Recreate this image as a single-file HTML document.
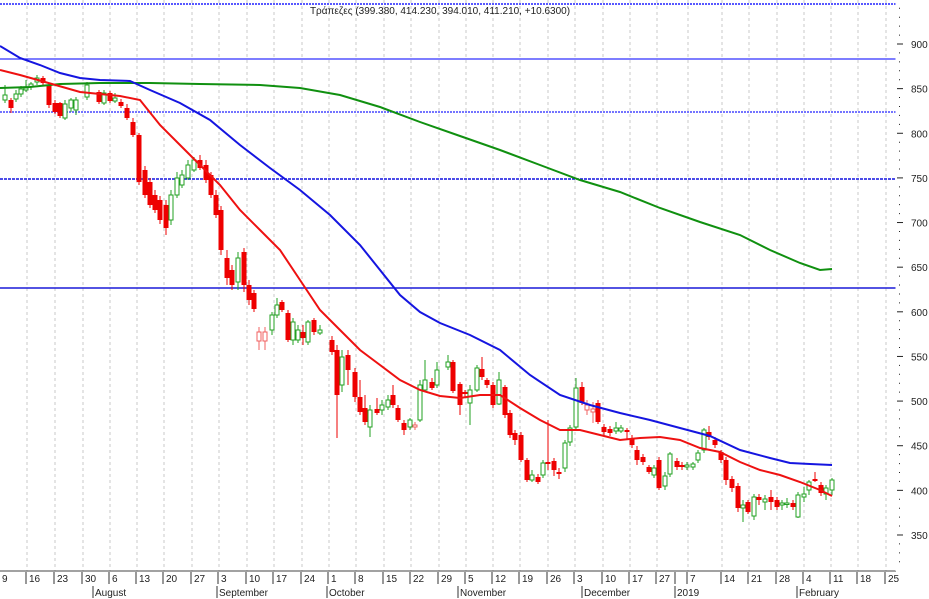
<!DOCTYPE html>
<html><head><meta charset="utf-8"><style>
html,body{margin:0;padding:0;background:#fff;width:929px;height:599px;overflow:hidden}
svg{display:block}
text{font-family:"Liberation Sans Narrow","Liberation Sans","DejaVu Sans",sans-serif;fill:#222}
</style></head><body>
<svg id="s" width="929" height="599" xmlns="http://www.w3.org/2000/svg">
<rect width="929" height="599" fill="#fff"/>
<g id="grid"></g>
<line x1="0" y1="4" x2="896" y2="4" stroke="#2020ff" stroke-width="1.5" stroke-dasharray="2,1"/>
<line x1="0" y1="59" x2="896" y2="59" stroke="#3030ff" stroke-width="1.2"/>
<line x1="0" y1="112" x2="896" y2="112" stroke="#2020ff" stroke-width="1.3" stroke-dasharray="2,1"/>
<line x1="0" y1="179" x2="896" y2="179" stroke="#1010e0" stroke-width="1.6" stroke-dasharray="3,1"/>
<line x1="0" y1="288" x2="896" y2="288" stroke="#1a1ad8" stroke-width="1.6"/>
<text x="440" y="14" font-size="10" text-anchor="middle">Τράπεζες (399.380, 414.230, 394.010, 411.210, +10.6300)</text>
<g id="c"></g>
<polyline fill="none" stroke="#109010" stroke-width="2" points="0,88 30,87 60,84 100,83 150,83 200,84 260,85 300,88 340,95 380,107 420,122 460,136 500,150 540,165 580,180 620,192 660,208 700,222 740,235 770,250 800,263 820,270 832,269"/>
<polyline fill="none" stroke="#1515e0" stroke-width="2" points="0,46 20,58 40,65 60,73 80,78 100,80 130,81 150,90 180,103 210,120 240,145 270,168 300,190 330,215 360,245 380,270 400,295 420,312 440,323 470,335 500,350 530,375 560,395 590,405 620,413 650,420 680,428 710,436 740,450 770,458 790,463 810,464 832,465"/>
<polyline fill="none" stroke="#ee1111" stroke-width="2" points="0,70 20,75 45,82 80,92 120,96 140,100 160,125 180,145 200,165 220,185 240,210 260,230 280,250 300,280 320,310 340,330 360,350 380,365 400,380 420,390 440,396 460,398 480,395 500,395 520,408 540,420 560,430 580,430 600,435 620,440 640,438 660,437 680,440 700,448 720,452 740,462 760,470 780,475 800,482 820,490 832,496"/>
<g id="ax"></g>
<line x1="0" y1="571" x2="896" y2="571" stroke="#444" stroke-width="1"/>
<line x1="896" y1="0" x2="896" y2="571" stroke="#fff"/>
</svg>
<script>
var NS="http://www.w3.org/2000/svg";
function el(p,t,a,txt){var e=document.createElementNS(NS,t);for(var k in a)e.setAttribute(k,a[k]);if(txt)e.textContent=txt;p.appendChild(e);return e;}
var g=document.getElementById('grid'),c=document.getElementById('c'),ax=document.getElementById('ax');
var ticks=[[0,"9"],[27,"16"],[55,"23"],[83,"30"],[110,"6"],[137,"13"],[164,"20"],[192,"27"],[219,"3"],[247,"10"],[274,"17"],[302,"24"],[329,"1"],[356,"8"],[384,"15"],[411,"22"],[439,"29"],[466,"5"],[493,"12"],[520,"19"],[548,"26"],[575,"3"],[603,"10"],[630,"17"],[657,"27"],[688,"7"],[722,"14"],[749,"21"],[777,"28"],[804,"4"],[831,"11"],[858,"18"],[886,"25"]];
ticks.forEach(function(t){
 if(t[0]>0)el(g,'line',{x1:t[0],y1:0,x2:t[0],y2:571,stroke:'#c8c8c8','stroke-dasharray':'3,3'});
 el(ax,'line',{x1:t[0]-1,y1:572,x2:t[0]-1,y2:584,stroke:'#333'});
 el(ax,'text',{x:t[0]+2,y:582,'font-size':'10'},t[1]);
});
el(ax,'line',{x1:675,y1:572,x2:675,y2:584,stroke:'#333'});
[[93,"August"],[217,"September"],[327,"October"],[458,"November"],[582,"December"],[675,"2019"],[797,"February"]].forEach(function(m){
 el(ax,'line',{x1:m[0],y1:586,x2:m[0],y2:598,stroke:'#333'});
 el(ax,'text',{x:m[0]+2,y:596,'font-size':'10'},m[1]);
});
// price axis
for(var p=300;p<=950;p+=10){var y=44+(900-p)*0.8927;if(y<2||y>568)continue;
 var major=p%50==0;
 el(ax,'line',{x1:major?897:899,y1:y,x2:major?903:900,y2:y,stroke:'#222'});
 if(major)el(ax,'text',{x:911,y:y+4,'font-size':'10'},""+p);
}
var D=[[5,95,100,85,103,'g'],[11,100,108,98,113,'r'],[16,94,99,90,102,'g'],[21,89,94,86,97,'g'],[26,88,90,80,92,'g'],[31,84,87,82,90,'g'],[37,78,82,75,85,'g'],[43,78,83,76,86,'r'],[49,85,105,83,108,'r'],[55,103,112,100,114,'r'],[60,103,116,102,118,'r'],[65,104,118,100,120,'g'],[71,100,108,98,112,'g'],[76,100,110,97,115,'g'],[87,85,97,82,100,'g'],[99,92,102,90,104,'r'],[104,93,103,90,105,'g'],[110,93,101,91,103,'r'],[115,98,101,93,103,'g'],[121,102,106,99,108,'r'],[127,108,118,104,120,'r'],[133,122,135,118,137,'r'],[139,135,182,133,185,'r'],[145,170,195,166,198,'r'],[150,182,205,178,208,'r'],[155,195,210,190,213,'r'],[160,200,220,196,224,'r'],[166,205,228,200,235,'r'],[171,195,220,190,225,'g'],[177,178,195,172,198,'g'],[182,175,185,170,188,'g'],[188,165,178,160,180,'g'],[194,160,170,157,172,'g'],[200,160,168,155,170,'r'],[206,165,180,160,183,'r'],[211,175,195,172,198,'r'],[216,195,215,190,218,'r'],[221,210,250,206,255,'r'],[227,258,278,250,285,'r'],[232,270,285,265,290,'r'],[238,258,282,252,290,'g'],[244,252,285,248,292,'r'],[249,285,300,280,305,'r'],[254,293,309,290,312,'r'],[259,332,341,327,350,'p'],[265,332,341,327,350,'p'],[272,315,330,312,335,'g'],[277,305,315,298,318,'g'],[282,302,310,300,312,'r'],[288,313,340,310,342,'r'],[293,322,340,318,345,'g'],[298,330,340,325,343,'g'],[303,332,338,325,345,'r'],[308,322,342,320,345,'g'],[314,320,332,318,335,'r'],[320,330,333,325,335,'g'],[332,340,352,336,355,'r'],[337,350,395,345,438,'r'],[342,357,385,350,392,'g'],[348,355,370,350,385,'r'],[355,372,397,368,402,'r'],[360,397,412,380,415,'r'],[365,408,422,395,425,'r'],[370,410,427,405,437,'g'],[377,409,413,398,415,'r'],[382,405,410,400,415,'g'],[388,400,407,395,410,'g'],[393,395,405,385,408,'r'],[398,408,420,405,422,'r'],[404,423,430,420,435,'r'],[410,420,427,418,430,'g'],[415,425,427,422,430,'p'],[420,385,420,380,422,'g'],[425,380,390,360,392,'g'],[432,382,388,378,390,'r'],[437,370,385,362,388,'g'],[448,362,367,355,370,'g'],[453,362,391,360,393,'r'],[460,384,405,382,415,'r'],[465,392,394,390,398,'r'],[470,390,403,385,425,'g'],[477,368,390,365,392,'g'],[482,369,377,357,380,'r'],[487,380,385,378,388,'r'],[493,385,405,382,408,'r'],[499,380,404,372,405,'g'],[505,387,415,385,418,'r'],[510,413,435,410,438,'r'],[515,433,440,430,445,'r'],[521,435,460,432,462,'r'],[527,460,480,458,482,'r'],[532,475,480,470,482,'g'],[538,477,482,474,484,'r'],[543,463,475,460,478,'g'],[548,462,464,420,470,'r'],[554,461,470,458,476,'r'],[559,472,474,468,479,'r'],[565,443,468,440,472,'g'],[570,428,442,425,446,'g'],[576,388,427,378,430,'g'],[582,387,403,382,405,'r'],[587,405,410,400,415,'p'],[593,409,412,402,423,'p'],[598,403,422,400,424,'r'],[604,427,432,424,436,'r'],[610,429,433,426,436,'r'],[616,428,431,422,434,'g'],[621,428,431,425,433,'g'],[627,430,432,428,440,'r'],[632,438,445,435,448,'r'],[637,450,460,446,465,'r'],[643,457,462,454,465,'r'],[649,467,472,465,474,'r'],[654,468,475,465,478,'g'],[659,460,488,457,490,'r'],[665,476,486,472,490,'g'],[670,454,474,452,477,'g'],[677,461,467,458,470,'r'],[682,465,467,462,470,'r'],[687,465,467,462,470,'g'],[693,464,467,462,470,'g'],[698,453,460,450,463,'g'],[704,430,450,428,453,'g'],[709,432,437,426,440,'r'],[715,440,445,437,448,'r'],[721,452,460,450,463,'r'],[726,460,480,457,485,'r'],[732,479,488,476,492,'r'],[738,486,508,483,512,'r'],[743,505,508,500,522,'g'],[748,502,512,500,514,'r'],[754,497,516,494,520,'g'],[759,497,500,494,505,'r'],[765,499,502,495,510,'g'],[771,497,502,490,510,'r'],[777,500,507,497,510,'r'],[782,503,505,500,510,'g'],[787,503,504,498,508,'g'],[793,503,507,500,510,'r'],[798,495,517,492,518,'g'],[804,494,497,487,502,'g'],[809,482,490,480,495,'g'],[815,479,481,472,482,'r'],[821,485,493,482,496,'r'],[826,488,494,485,500,'g'],[832,480,490,478,495,'g']];
D.forEach(function(d){
 var col=d[5]=='g'?'#22a022':(d[5]=='p'?'#f06060':'#ee0000');
 el(c,'line',{x1:d[0],y1:d[3],x2:d[0],y2:d[4],stroke:col,'stroke-width':1});
 var h=Math.max(d[2]-d[1],1.5);
 if(d[5]=='r')el(c,'rect',{x:d[0]-2.5,y:d[1],width:5,height:h,fill:col});
 else el(c,'rect',{x:d[0]-2,y:d[1],width:4,height:h,fill:'#fff',stroke:col,'stroke-width':1});
});
</script>
</body></html>
